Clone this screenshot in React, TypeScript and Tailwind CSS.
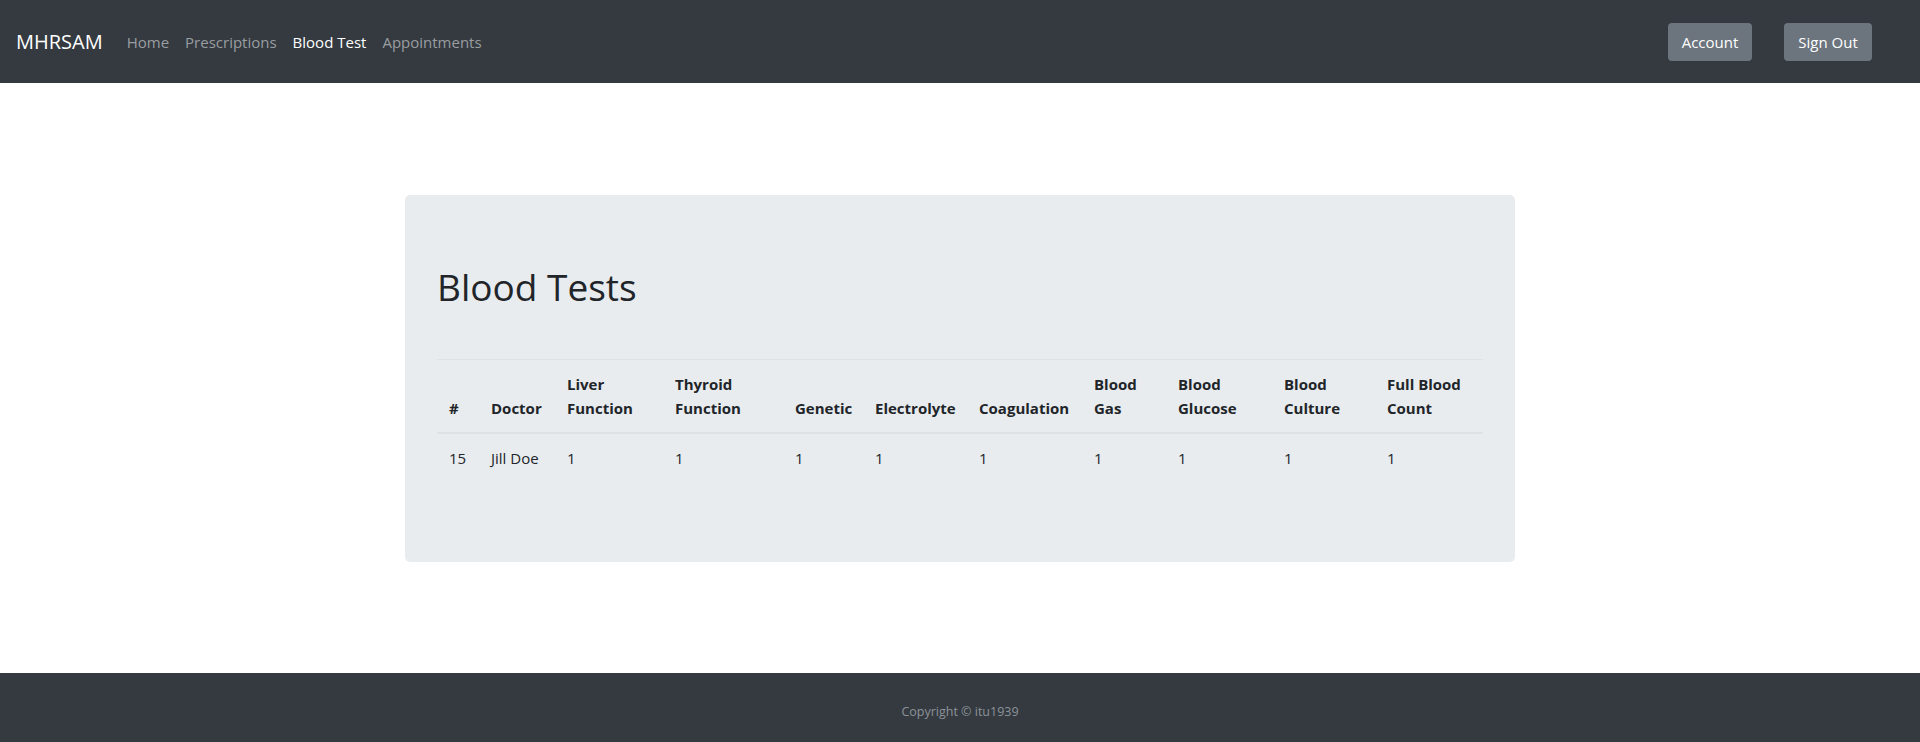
import React from 'react';

type Test = {
  id: number;
  doctor: string;
  values: number[];
};

const columns = [
  { label: '#', width: 'w-[42px]' },
  { label: 'Doctor', width: 'w-[76px]' },
  { label: 'Liver Function', width: 'w-[108px]' },
  { label: 'Thyroid Function', width: 'w-[120px]' },
  { label: 'Genetic', width: 'w-[80px]' },
  { label: 'Electrolyte', width: 'w-[104px]' },
  { label: 'Coagulation', width: 'w-[115px]' },
  { label: 'Blood Gas', width: 'w-[84px]' },
  { label: 'Blood Glucose', width: 'w-[106px]' },
  { label: 'Blood Culture', width: 'w-[103px]' },
  { label: 'Full Blood Count', width: 'w-[108px]' },
];

const tests: Test[] = [
  { id: 15, doctor: 'Jill Doe', values: [1, 1, 1, 1, 1, 1, 1, 1, 1] },
];

const navLinks = [
  { label: 'Home', active: false },
  { label: 'Prescriptions', active: false },
  { label: 'Blood Test', active: true },
  { label: 'Appointments', active: false },
];

const Navbar: React.FC = () => (
  <nav className="flex h-[83px] items-center bg-[#343a40] px-4">
    <a href="#" className="mr-4 text-[20px] leading-[30px] text-white">
      MHRSAM
    </a>
    <div className="flex items-center">
      {navLinks.map((link) => (
        <a
          key={link.label}
          href="#"
          className={
            link.active
              ? 'px-2 text-[15px] leading-6 text-white'
              : 'px-2 text-[15px] leading-6 text-[#9a9da0]'
          }
        >
          {link.label}
        </a>
      ))}
    </div>
    <div className="ml-auto mr-8 flex items-center gap-8">
      <button className="h-[38px] w-[84px] rounded bg-[#6c757d] text-[15px] leading-6 text-white">
        Account
      </button>
      <button className="h-[38px] w-[88px] rounded bg-[#6c757d] text-[15px] leading-6 text-white">
        Sign Out
      </button>
    </div>
  </nav>
);

const BloodTestTable: React.FC = () => (
  <table className="mt-12 w-full table-fixed border-collapse text-[15px] leading-6 text-[#212529]">
    <thead>
      <tr>
        {columns.map((col) => (
          <th
            key={col.label}
            className={`${col.width} border-t border-b-2 border-[#dee2e6] p-3 text-left align-bottom font-bold`}
          >
            {col.label}
          </th>
        ))}
      </tr>
    </thead>
    <tbody>
      {tests.map((t) => (
        <tr key={t.id}>
          <td className="p-3 align-top">{t.id}</td>
          <td className="p-3 align-top">{t.doctor}</td>
          {t.values.map((v, i) => (
            <td key={i} className="p-3 align-top">
              {v}
            </td>
          ))}
        </tr>
      ))}
    </tbody>
  </table>
);

const Footer: React.FC = () => (
  <footer className="flex h-[69px] items-center justify-center bg-[#343a40] pt-2">
    <span className="text-[12.5px] leading-5 text-[#8c9298]">Copyright © itu1939</span>
  </footer>
);

export default function App() {
  return (
    <div className="flex min-h-screen flex-col bg-white font-['Open_Sans',sans-serif] text-[#212529]">
      <Navbar />
      <main className="flex flex-1 items-center justify-center">
        <div className="w-[1110px] rounded-[5px] bg-[#e9ecef] px-8 pt-16 pb-16">
          <h1 className="mt-1 text-[37px] font-normal leading-[48px] text-[#212529]">Blood Tests</h1>
          <BloodTestTable />
          <div className="h-4" />
        </div>
      </main>
      <Footer />
    </div>
  );
}
